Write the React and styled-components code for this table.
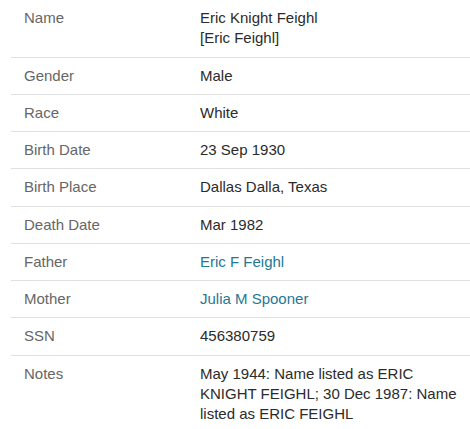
import React from "react";
import styled, { createGlobalStyle } from "styled-components";

const GlobalStyle = createGlobalStyle`
    body {
        margin: 0;
        background: #fff;
        font-family: "Liberation Sans", Arial, sans-serif;
    }
`;

const Table = styled.div`
    margin-left: 11px;
    width: 459px;
`;

const Row = styled.div`
    display: grid;
    grid-template-columns: 189px 1fr;
    border-bottom: ${(props) => (props.last ? "none" : "1px solid #e1e1e1")};
`;

const Label = styled.div`
    padding: 8px 13px;
    font-size: 15px;
    line-height: 20.25px;
    color: #666;
`;

const Value = styled.div`
    padding: 8px 12px 8px 0;
    font-size: 15px;
    line-height: 20.25px;
    color: #2b2b2b;
`;

const Link = styled.a`
    color: #1f7896;
    text-decoration: none;
`;

const rows = [
    { label: "Name", value: <>Eric Knight Feighl<br />[Eric Feighl]</> },
    { label: "Gender", value: "Male" },
    { label: "Race", value: "White" },
    { label: "Birth Date", value: "23 Sep 1930" },
    { label: "Birth Place", value: "Dallas Dalla, Texas" },
    { label: "Death Date", value: "Mar 1982" },
    { label: "Father", value: <Link href="#">Eric F Feighl</Link> },
    { label: "Mother", value: <Link href="#">Julia M Spooner</Link> },
    { label: "SSN", value: "456380759" },
    {
        label: "Notes",
        value: "May 1944: Name listed as ERIC KNIGHT FEIGHL; 30 Dec 1987: Name listed as ERIC FEIGHL",
    },
];

const App = () => {
    return (
        <>
            <GlobalStyle />
            <Table>
                {rows.map((item, i) => (
                    <Row key={i} last={i === rows.length - 1}>
                        <Label>{item.label}</Label>
                        <Value>{item.value}</Value>
                    </Row>
                ))}
            </Table>
        </>
    );
};

export default App;
